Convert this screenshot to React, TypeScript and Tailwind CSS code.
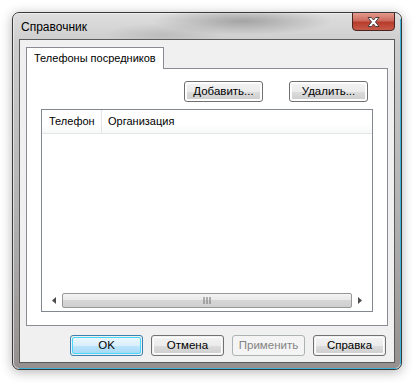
import React from "react";

const font = { fontFamily: '"Liberation Sans", Arial, sans-serif' };

function Btn({ children, w = "w-[73px]", kind = "normal" }: { children: React.ReactNode; w?: string; kind?: "normal" | "default" | "disabled" }) {
  if (kind === "default") {
    return (
      <div className={`${w} h-[21px] rounded-[3px] border border-[#3c7fb1] p-px`}>
        <div className="h-full w-full rounded-[2px] border border-[#48d8fb] bg-[linear-gradient(#eaf6fd_0%,#d9f0fc_50%,#bee6fd_50%,#a7d9f5_100%)] flex items-center justify-center text-[11.5px] text-black leading-none">
          {children}
        </div>
      </div>
    );
  }
  if (kind === "disabled") {
    return (
      <div className={`${w} h-[21px] rounded-[3px] border border-[#adb2b5] bg-[#f4f4f4] flex items-center justify-center text-[11.5px] text-[#838383] leading-none`}>
        {children}
      </div>
    );
  }
  return (
    <div className={`${w} h-[21px] rounded-[3px] border border-[#707070] p-px`}>
      <div className="h-full w-full rounded-[2px] border border-[#fcfcfc] bg-[linear-gradient(#f2f2f2_0%,#ebebeb_50%,#dddddd_50%,#cfcfcf_100%)] flex items-center justify-center text-[11.5px] text-black leading-none">
        {children}
      </div>
    </div>
  );
}

export default function App() {
  return (
    <div className="w-[413px] h-[383px] bg-white pt-[12px] pl-[12px]" style={font}>
      <div className="relative w-[390px] h-[358px] rounded-[7px] border border-[#3a3a3a] shadow-[0_2px_12px_rgba(0,0,0,0.3)] bg-[linear-gradient(180deg,#dedede_0px,#cdcdcd_30px,#b2b2b2_200px,#958f8f_358px)] flex flex-col overflow-hidden">
        <div className="absolute inset-0 rounded-[6px] border border-[#f4f4f4]/70 pointer-events-none" />
        <div className="absolute right-0 top-[6px] bottom-0 w-px bg-[#3fb3d6]" />
        <div className="absolute left-[6px] right-0 bottom-0 h-px bg-[#3fb3d6]" />
        {/* title bar */}
        <div className="relative h-[26px] flex items-start shrink-0 bg-[radial-gradient(ellipse_90px_14px_at_230px_8px,rgba(110,110,110,0.5),transparent),radial-gradient(ellipse_60px_12px_at_150px_22px,rgba(150,150,150,0.35),transparent)]">
          <div className="ml-[8px] mt-[7px] text-[12px] leading-[14px] text-black">Справочник</div>
          <div className="absolute right-[6px] top-[-1px] w-[43px] h-[19px] rounded-b-[4px] border border-[#4a2420] bg-[linear-gradient(#e39a8d_0%,#cc6b5d_45%,#b73c2c_55%,#c75a48_100%)] flex items-center justify-center">
            <svg width="15" height="12" viewBox="0 0 15 12">
              <path d="M2 1.5 L5.5 1.5 L7.5 4 L9.5 1.5 L13 1.5 L9.5 6 L13 10.5 L9.5 10.5 L7.5 8 L5.5 10.5 L2 10.5 L5.5 6 Z" fill="#ffffff" stroke="#4a3d3d" strokeWidth="1" strokeLinejoin="round" />
            </svg>
          </div>
        </div>
        {/* client */}
        <div className="mx-[6px] mb-[6px] flex-1 border border-[#5a5a5a] bg-[#f0f0f0] flex flex-col px-[6px] pt-[7px]">
          <div className="flex">
            <div className="h-[22px] px-[7px] border border-[#898c95] border-b-0 bg-white text-[11px] leading-none flex items-center text-black relative z-10 -mb-px">
              Телефоны посредников
            </div>
          </div>
          <div className="h-[258px] border border-[#898c95] bg-white flex flex-col px-[14px]">
            <div className="flex justify-end gap-[26px] pt-[12px] pr-[5px]">
              <Btn w="w-[79px]">Добавить...</Btn>
              <Btn w="w-[79px]">Удалить...</Btn>
            </div>
            <div className="mt-[7px] h-[203px] border border-[#828790] bg-white flex flex-col">
              <div className="h-[24px] flex items-stretch text-[11px] text-black bg-[linear-gradient(#ffffff_0%,#ffffff_60%,#f7f8f9_100%)] border-b border-[#e5e5e5]">
                <div className="w-[60px] pl-[7px] flex items-center border-r border-[#e5e5e5]">Телефон</div>
                <div className="pl-[6px] flex items-center">Организация</div>
              </div>
              <div className="flex-1" />
              <div className="h-[17px] mx-[4px] mb-[2px] flex items-center">
                <div className="w-[16px] h-full flex items-center justify-center">
                  <svg width="4" height="7" viewBox="0 0 4 7"><path d="M4 0 L0 3.5 L4 7 Z" fill="#4d4d4d" /></svg>
                </div>
                <div className="flex-1 h-[15px] rounded-[2px] border border-[#979797] bg-[linear-gradient(#f3f3f3_0%,#e8e8e8_50%,#d6d6d6_50%,#cfcfcf_100%)] flex items-center justify-center">
                  <svg width="8" height="7" viewBox="0 0 8 7"><path d="M1 0V7M4 0V7M7 0V7" stroke="#6e6e6e" strokeWidth="1" /></svg>
                </div>
                <div className="w-[16px] h-full flex items-center justify-center">
                  <svg width="4" height="7" viewBox="0 0 4 7"><path d="M0 0 L4 3.5 L0 7 Z" fill="#4d4d4d" /></svg>
                </div>
              </div>
            </div>
          </div>
          <div className="flex justify-end gap-[8px] pr-[2px] mt-[9px]">
            <Btn kind="default">OK</Btn>
            <Btn>Отмена</Btn>
            <Btn kind="disabled">Применить</Btn>
            <Btn>Справка</Btn>
          </div>
        </div>
      </div>
    </div>
  );
}
